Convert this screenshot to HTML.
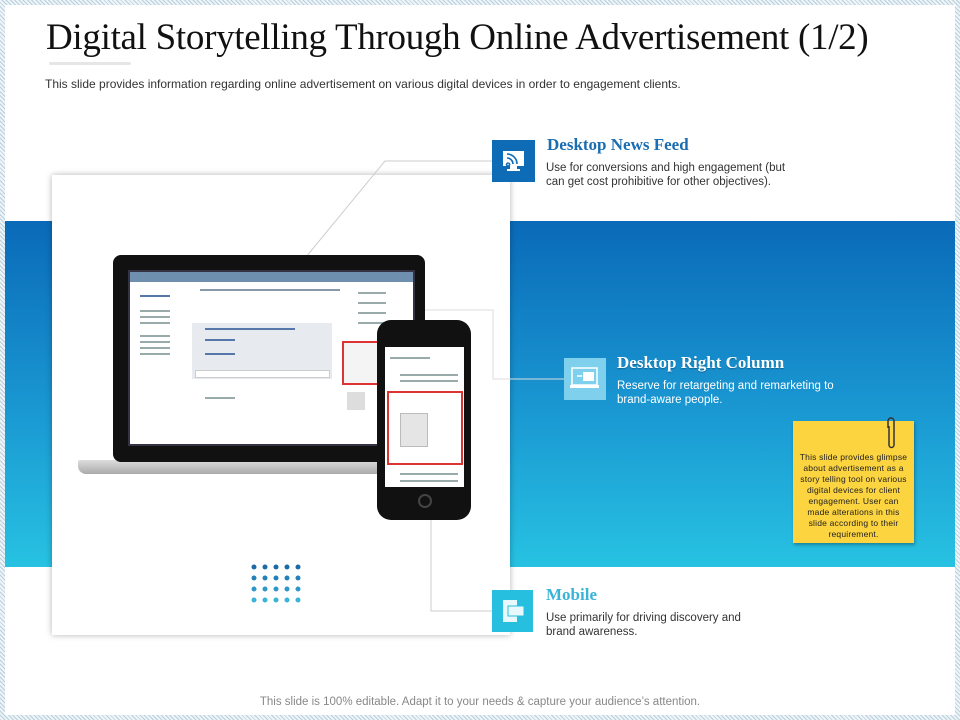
<!DOCTYPE html>
<html><head><meta charset="utf-8"><style>
*{margin:0;padding:0;box-sizing:border-box}
body{width:960px;height:720px;position:relative;overflow:hidden;background:#fff;font-family:"Liberation Sans",sans-serif}
.border{position:absolute;inset:0;background:repeating-linear-gradient(45deg,#b8cfdc 0 1px,#eef4f7 1px 3px)}
.inner{position:absolute;left:5px;top:5px;right:5px;bottom:5px;background:#fff}
.abs{position:absolute}
h1{position:absolute;left:46px;top:16px;font-family:"Liberation Serif",serif;font-weight:normal;font-size:37px;color:#111;letter-spacing:-0.3px;white-space:nowrap}
.band{position:absolute;left:5px;top:221px;width:950px;height:346px;background:linear-gradient(#0a6ab8,#1a98d2 55%,#27c2e2)}
.card{position:absolute;left:52px;top:175px;width:458px;height:460px;background:#fff;box-shadow:0 0 6px rgba(0,0,0,.3)}
.t{font-family:"Liberation Serif",serif;font-weight:bold;font-size:17px}
.d{font-size:11.5px;line-height:14px;color:#333}
.bar{position:absolute;height:2px;background:#9aa}
</style></head><body>
<div class="border"></div><div class="inner"></div>
<h1>Digital Storytelling Through Online Advertisement (1/2)</h1>
<div class="abs" style="left:49px;top:62px;width:82px;height:3px;background:#e6e6e6;border-radius:2px"></div>
<div class="abs" style="left:45px;top:77px;font-size:12px;color:#333;white-space:nowrap">This slide provides information regarding online advertisement on various digital devices in order to engagement clients.</div>
<div class="band"></div>
<div class="card"></div>
<svg class="abs" style="left:0;top:0" width="960" height="720">
<polyline points="250,325 385,161 492,161" fill="none" stroke="#ccc" stroke-width="1"/>
<polyline points="380,310 493,310 493,379 564,379" fill="none" stroke="#ddd" stroke-width="1"/>
<polyline points="431,480 431,611 492,611" fill="none" stroke="#ccc" stroke-width="1"/>
</svg>
<!-- laptop -->
<div class="abs" style="left:78px;top:460px;width:380px;height:14px;background:linear-gradient(#ddd,#aaa);border-radius:2px 2px 8px 8px"></div>
<div class="abs" style="left:113px;top:255px;width:312px;height:207px;background:#111;border-radius:8px"></div>
<div class="abs" style="left:128px;top:270px;width:287px;height:176px;background:#fff;border:2px solid #334"></div>
<div class="abs" style="left:130px;top:272px;width:283px;height:10px;background:#6f8fae"></div>
<div class="abs" style="left:192px;top:323px;width:140px;height:56px;background:#e7ebf0"></div>
<div class="abs" style="left:195px;top:370px;width:135px;height:8px;background:#fff;border:1px solid #ccc"></div>
<div class="bar" style="left:140px;top:295px;width:30px;background:#57a"></div>
<div class="bar" style="left:140px;top:310px;width:30px"></div><div class="bar" style="left:140px;top:316px;width:30px"></div><div class="bar" style="left:140px;top:322px;width:30px"></div>
<div class="bar" style="left:140px;top:335px;width:30px"></div><div class="bar" style="left:140px;top:341px;width:30px"></div><div class="bar" style="left:140px;top:347px;width:30px"></div><div class="bar" style="left:140px;top:353px;width:30px"></div>
<div class="bar" style="left:200px;top:289px;width:140px;background:#89a"></div>
<div class="bar" style="left:205px;top:328px;width:90px;background:#57a"></div>
<div class="bar" style="left:205px;top:339px;width:30px;background:#57a"></div>
<div class="bar" style="left:205px;top:353px;width:30px;background:#57a"></div>
<div class="bar" style="left:205px;top:397px;width:30px"></div>
<div class="bar" style="left:358px;top:292px;width:28px"></div><div class="bar" style="left:358px;top:302px;width:28px"></div><div class="bar" style="left:358px;top:312px;width:28px"></div><div class="bar" style="left:358px;top:322px;width:28px"></div>
<div class="abs" style="left:342px;top:341px;width:40px;height:44px;border:2px solid #d33;background:#f4f4f4"></div>
<div class="abs" style="left:347px;top:392px;width:18px;height:18px;background:#ddd"></div>
<!-- phone -->
<div class="abs" style="left:377px;top:320px;width:94px;height:200px;background:#111;border-radius:14px"></div>
<div class="abs" style="left:385px;top:347px;width:79px;height:140px;background:#fff"></div>
<div class="abs" style="left:387px;top:391px;width:76px;height:74px;border:2px solid #d33"></div>
<div class="abs" style="left:400px;top:413px;width:28px;height:34px;background:#e5e5e5;border:1px solid #bbb"></div>
<div class="bar" style="left:390px;top:357px;width:40px"></div><div class="bar" style="left:400px;top:374px;width:58px"></div><div class="bar" style="left:400px;top:380px;width:58px"></div>
<div class="bar" style="left:400px;top:473px;width:58px"></div><div class="bar" style="left:400px;top:480px;width:58px"></div>
<div class="abs" style="left:418px;top:494px;width:14px;height:14px;border-radius:50%;border:2px solid #444"></div>
<svg class="abs" style="left:249px;top:563px" width="60" height="45">
<g fill="#1b6aa8"><circle cx="5" cy="4" r="2.5"/><circle cx="16" cy="4" r="2.5"/><circle cx="27" cy="4" r="2.5"/><circle cx="38" cy="4" r="2.5"/><circle cx="49" cy="4" r="2.5"/></g>
<g fill="#2380b8"><circle cx="5" cy="15" r="2.5"/><circle cx="16" cy="15" r="2.5"/><circle cx="27" cy="15" r="2.5"/><circle cx="38" cy="15" r="2.5"/><circle cx="49" cy="15" r="2.5"/></g>
<g fill="#2d98c8"><circle cx="5" cy="26" r="2.5"/><circle cx="16" cy="26" r="2.5"/><circle cx="27" cy="26" r="2.5"/><circle cx="38" cy="26" r="2.5"/><circle cx="49" cy="26" r="2.5"/></g>
<g fill="#38b4d8"><circle cx="5" cy="37" r="2.5"/><circle cx="16" cy="37" r="2.5"/><circle cx="27" cy="37" r="2.5"/><circle cx="38" cy="37" r="2.5"/><circle cx="49" cy="37" r="2.5"/></g>
</svg>
<div class="abs" style="left:492px;top:140px;width:43px;height:42px;background:#0d6cb5">
<svg width="43" height="42"><rect x="11" y="11" width="21" height="15" fill="#fff"/><rect x="18" y="26" width="7" height="3" fill="#fff"/><rect x="15" y="29" width="13" height="2" fill="#fff"/><path d="M16 23a1.5 1.5 0 1 0 .1 0M15 18a6 6 0 0 1 6 6M15 14a10 10 0 0 1 10 10" stroke="#0d6cb5" stroke-width="1.6" fill="none"/></svg></div>
<div class="abs t" style="left:547px;top:135px;color:#1a6db0">Desktop News Feed</div>
<div class="abs d" style="left:546px;top:161px">Use for conversions and high engagement (but<br>can get cost prohibitive for other objectives).</div>
<div class="abs" style="left:564px;top:358px;width:42px;height:42px;background:#7fd0ec">
<svg width="42" height="42"><rect x="8" y="10" width="25" height="17" fill="none" stroke="#fff" stroke-width="1.5"/><rect x="6" y="27" width="29" height="3" fill="#fff"/><rect x="19" y="14" width="11" height="9" fill="#fff"/><path d="M13 18h5" stroke="#fff" stroke-width="1.5"/></svg></div>
<div class="abs t" style="left:617px;top:353px;color:#fff;text-shadow:0 1px 1px rgba(0,0,0,.3)">Desktop Right Column</div>
<div class="abs d" style="left:617px;top:379px;color:#fff">Reserve for retargeting and remarketing to<br>brand-aware people.</div>
<div class="abs" style="left:492px;top:590px;width:41px;height:42px;background:#26bfe0">
<svg width="41" height="42"><rect x="11" y="10" width="14" height="22" fill="#e8f8fc"/><rect x="16" y="16" width="16" height="10" fill="#e8f8fc" stroke="#26bfe0" stroke-width="1"/></svg></div>
<div class="abs t" style="left:546px;top:585px;color:#3ab4d6">Mobile</div>
<div class="abs d" style="left:546px;top:611px">Use primarily for driving discovery and<br>brand awareness.</div>
<div class="abs" style="left:793px;top:421px;width:121px;height:122px;background:#fcd440;box-shadow:1px 2px 3px rgba(0,0,0,.3);font-size:8.5px;line-height:11px;color:#222;text-align:center;padding:31px 6px 0"><span style="letter-spacing:0.2px">This slide provides glimpse about advertisement as a story telling tool on various digital devices for client engagement. User can made alterations in this slide according to their requirement.</span></div>
<svg class="abs" style="left:884px;top:416px" width="14" height="34"><path d="M4 12V5a3 3 0 0 1 6 0v24a2.5 2.5 0 0 1-5 0V10" fill="none" stroke="#333" stroke-width="1.5"/></svg>
<div class="abs" style="left:0;width:960px;top:696px;text-align:center;font-size:11.5px;color:#888">This slide is 100% editable. Adapt it to your needs &amp; capture your audience’s attention.</div>
</body></html>
